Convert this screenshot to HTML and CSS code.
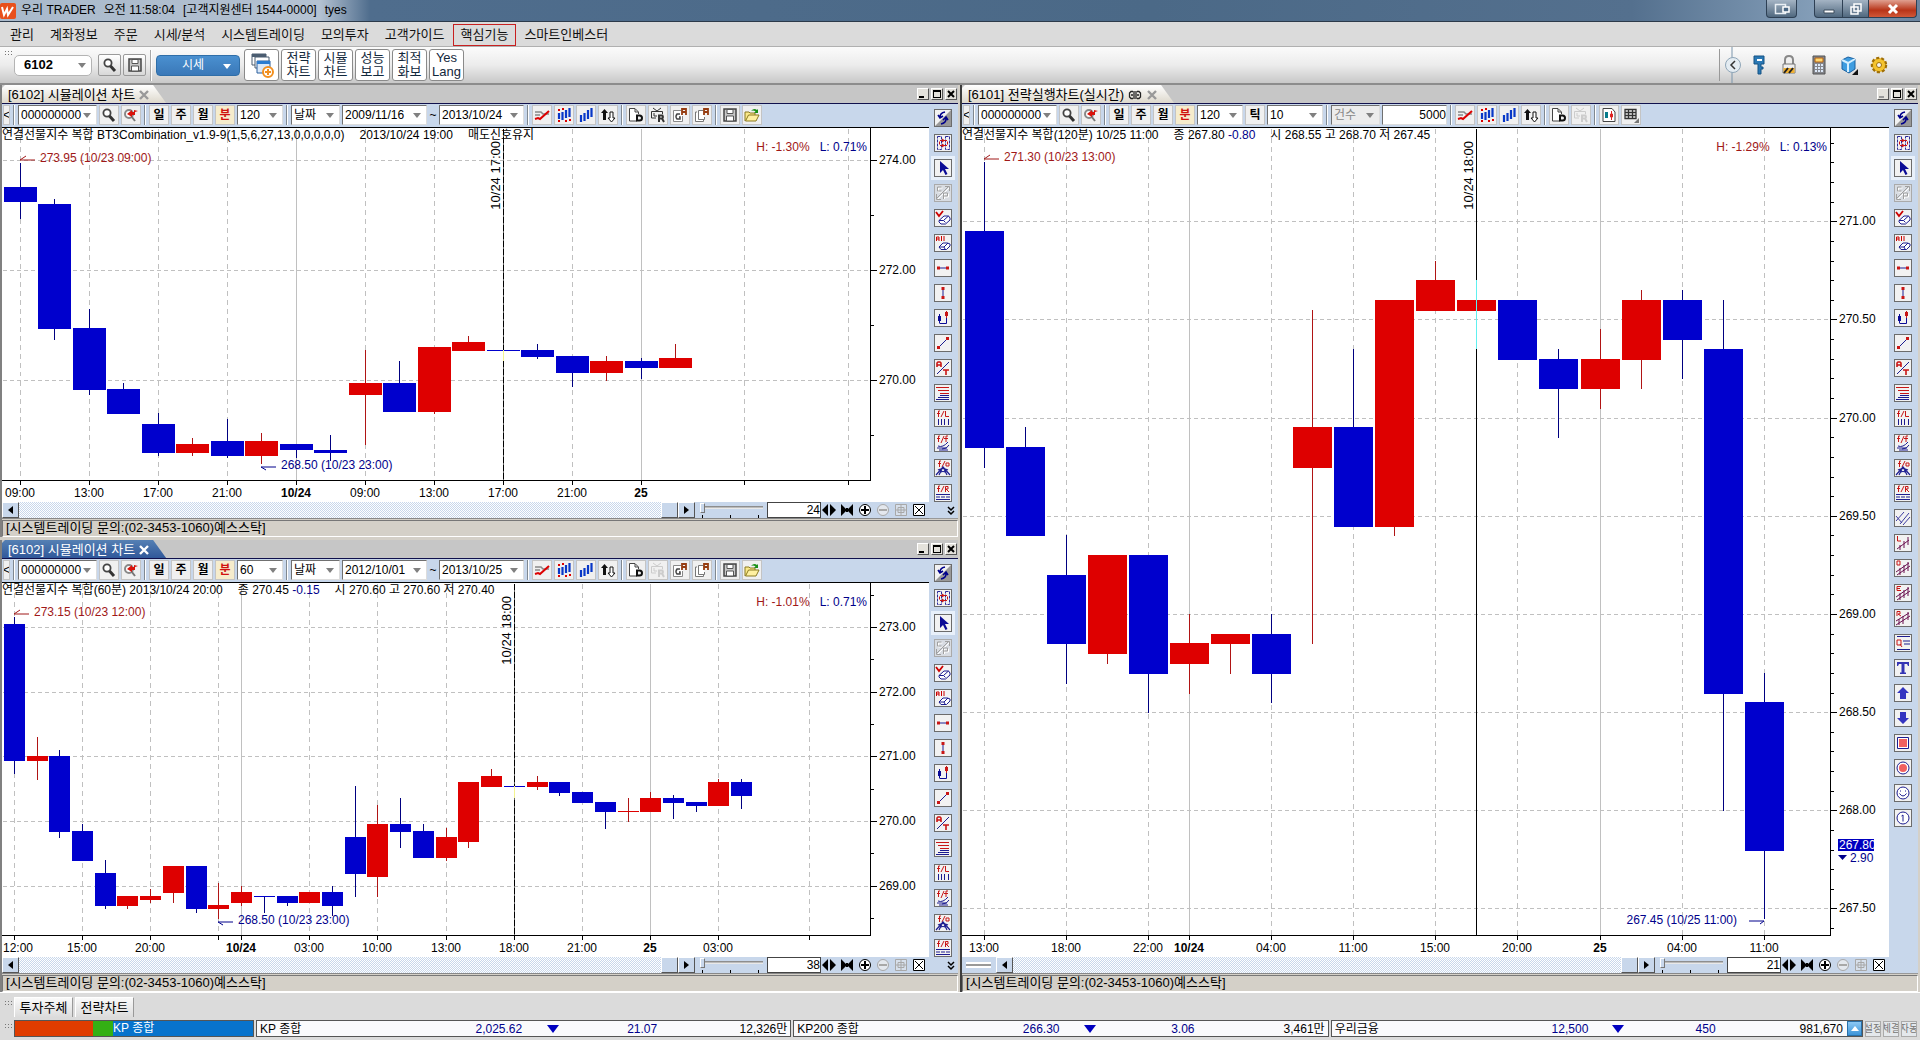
FILE: index.html
```html
<!DOCTYPE html>
<html lang="ko">
<head>
<meta charset="utf-8">
<title>우리 TRADER</title>
<link rel="stylesheet" href="styles.css">
</head>
<body>
<svg class="sprite" aria-hidden="true">
  <symbol id="i-find" viewBox="0 0 16 16"><circle cx="6" cy="6" r="3.6" fill="#fff" stroke="#444" stroke-width="1.8"/><path d="M8.5 9 13 14" stroke="#333" stroke-width="3"/></symbol>
  <symbol id="i-findred" viewBox="0 0 16 16"><circle cx="6" cy="7" r="4" fill="#fff" stroke="#888" stroke-width="2"/><path d="M8.500 9.500 12 14" stroke="#777" stroke-width="2"/><path d="M4 7 9 3v2h2V3l4 1-3 1v3H9v2z" fill="#d8140c"/></symbol>
  <symbol id="i-trend" viewBox="0 0 16 16"><path d="M1 5h6l2 2h6M1 8h5" fill="none" stroke="#888" stroke-width="1.500"/><path d="m1 12 3-1 2 1 9-8" fill="none" stroke="#d00" stroke-width="2"/></symbol>
  <symbol id="i-bars1" viewBox="0 0 16 16"><path d="M3 6v6M6.500 5v8M10 3v8M13.500 1v9" stroke="#0838c8" stroke-width="2.200"/><path d="M2 2h2v2H2zM6 1h2v2H6zM2 13h2v2H2zM9 13h2v2H9zM13 12h2v2h-2z" fill="#d00"/></symbol>
  <symbol id="i-bars2" viewBox="0 0 16 16"><path d="M3 8v7M6.500 6v8M10 3v9M13.500 1v9" stroke="#0838c8" stroke-width="2.200"/></symbol>
  <symbol id="i-updown" viewBox="0 0 16 16"><path d="M4.500 2 8 6H6v7H3V6H1z" fill="#111"/><path d="M10 5h3v6h2l-3.500 4L8 11h2z" fill="#fff" stroke="#111"/></symbol>
  <symbol id="i-docd" viewBox="0 0 16 16"><path d="M9 14H1.500V1.500H7L10.500 5v2M7 2v3h3" fill="#fff" stroke="#444"/><path d="M9 8.500h2.500q2.500 0 2.500 2.500t-2.500 2.500H9z" fill="none" stroke="#111" stroke-width="2"/></symbol>
  <symbol id="i-tvr" viewBox="0 0 16 16"><path d="m3 1 4 3 4-3M1.500 5V4.500h11V7M1.500 5v6H6M4 6v3h3" fill="none" stroke="currentColor"/><path d="M9 15V8.500h3.500q1 1.500 0 3H9m3 0 2 3.500" fill="none" stroke="currentColor" stroke-width="2"/></symbol>
  <symbol id="i-docg" viewBox="0 0 16 16"><path d="M9 3.500H1.500v11h9V9" fill="#fff" stroke="#888"/><path d="M8 7H5Q3 9.500 5 12h3v-2H7" fill="none" stroke="#444" stroke-width="1.500"/><path d="M10 8V2h4v6M10 5h4" fill="none" stroke="#963c10" stroke-width="1.800"/></symbol>
  <symbol id="i-doca" viewBox="0 0 16 16"><path d="M3 5H1.500v9.500h8V13M9 3.500H4.500v9h6V10" fill="#fff" stroke="#777"/><path d="M10 8V2h4v6M10 5h4" fill="none" stroke="#963c10" stroke-width="1.800"/></symbol>
  <symbol id="i-save" viewBox="0 0 16 16"><path d="M2 2h12v12H2z" fill="#c8c8c8" stroke="#444" stroke-width="1.500"/><path d="M5 2.500h6v4H5zM4.500 9h7v5h-7z" fill="#fff" stroke="#555"/></symbol>
  <symbol id="i-open" viewBox="0 0 16 16"><path d="M1 14V5h4l1 1h5v3" fill="#fbe98a" stroke="#8a7a20"/><path d="m1.500 14 3-6H15l-3 6z" fill="#fff0a0" stroke="#8a7a20"/><path d="M7 4q3-3.500 6-1l1-1v4h-4l1.500-1.500Q9.500 3 7 4z" fill="#189018"/></symbol>
  <symbol id="i-candledoc" viewBox="0 0 16 16"><path d="M2 1.500h9L14 5v9.500H2z" fill="#fff" stroke="#444"/><path d="M4 5h3v6H4z" fill="#067a8a"/><path d="M10.500 4v9M9.500 7h2v3h-2z" stroke="#d22" fill="#fff"/></symbol>
  <symbol id="i-grid" viewBox="0 0 16 16"><path d="M2 2.500h11v9H2zM2 5.500h11M2 8.500h11M5.500 2v10M9.500 2v10" fill="none" stroke="#333" stroke-width="1.300"/><path d="M16 11v5h-5z" fill="#777"/></symbol>

  <symbol id="s-swap" viewBox="0 0 16 16"><path d="M16 0v16H0z" fill="#999"/><path d="M10 2Q5 3 5 7M3 5l2 3 3-2M6 14q5-1 5-5M8 10l3-3 2 3" fill="none" stroke="#00008b" stroke-width="1.600"/></symbol>
  <symbol id="s-film" viewBox="0 0 16 16"><path d="M2.500 1.500h4v13h-4zM10.500 1.500h4v13h-4z" fill="none" stroke="#2a2a9a" stroke-dasharray="3 1"/><path d="M5 5.500h7M5 10.500h7" stroke="#c81616"/><path d="M7 3.500v4l3-2zM7 8.500v4l3-2zM4 6.500h1v3H4zM12 6.500h1v3h-1z" fill="#c81616"/></symbol>
  <symbol id="s-arrow" viewBox="0 0 16 16"><path d="M5 1v12l3-3 2.500 5 2-1L10 9h4z" fill="#0a0a96"/></symbol>
  <symbol id="s-cp" viewBox="0 0 16 16"><path d="M7.500 3H3.500v4h4M3 14 14 3M9.500 14V9h4v3h-4" fill="none" stroke="#fff"/><path d="M6.500 2H2.500v4h4M2 13 13 2M8.500 14V8h4v3h-4M1.500 9v5.500H6M10 1.500h4.500V6" fill="none" stroke="#a0a0a0"/></symbol>
  <symbol id="s-erase" viewBox="0 0 16 16"><path d="m1 2 3 4 4-5" fill="none" stroke="#c00" stroke-width="1.800"/><path d="m4 10.500 5-4.500h4.500L15 8v2l-4.500 4H6l-2-2zh4.500l2 2M8.500 10.500 13.500 6" fill="#fff" stroke="#1c1c90"/></symbol>
  <symbol id="s-eraseall" viewBox="0 0 16 16"><path d="M1.500 6V2h2.500v4M1.500 4H4M6.500 1v5M9 1v5" fill="none" stroke="#c00"/><path d="m4 12 4-4h4.500L15 9v2l-3.500 3.500H6zh5l1 2M9 12l4-4" fill="#fff" stroke="#1c1c90"/></symbol>
  <symbol id="s-hline" viewBox="0 0 16 16"><path d="M3 8h10" stroke="#1c1c90"/><path d="M2 6.500h3v3H2zM11 6.500h3v3h-3z" fill="#c81616"/></symbol>
  <symbol id="s-vline" viewBox="0 0 16 16"><path d="M8 3v10" stroke="#1c1c90"/><path d="M6.500 2h3v3h-3zM6.500 11h3v3h-3z" fill="#c81616"/></symbol>
  <symbol id="s-candle" viewBox="0 0 16 16"><path d="M3 6h3v5H3zM4 4h1v9H4z" fill="#0a0a96"/><path d="M4.500 13.500h7V8" fill="none" stroke="#0a0a96"/><path d="M10 2h3v4h-3zM11 1h1v7h-1z" fill="#c81616"/></symbol>
  <symbol id="s-diag" viewBox="0 0 16 16"><path d="M3 13 13 3" stroke="#1c1c90"/><path d="M2 11h3v3H2zM11 2h3v3h-3z" fill="#c81616"/></symbol>
  <symbol id="s-at" viewBox="0 0 16 16"><path d="M2 7V3l1-1h2l1 1v4M2 5h4M8 10h6M11 10v5" fill="none" stroke="#c81616" stroke-width="1.600"/><path d="M2 14 14 2" stroke="#1c1c90"/></symbol>
  <symbol id="s-levels" viewBox="0 0 16 16"><path d="M1 2.500h13M3 5.500h11M5 8.500h9" stroke="#c81616"/><path d="M5 10.500h9M3 12.500h11M1 14.500h13" stroke="#1c1c90"/></symbol>
  <symbol id="s-fl" viewBox="0 0 16 16"><path d="M5 1H3.500v6M2 3.500h3M6 7l3-6M10.500 1v5.500H14" fill="none" stroke="#c81616"/><path d="M3.500 9v6M6.500 9v6M9.500 9v6M13.500 9v6" stroke="#1c1c90"/></symbol>
  <symbol id="s-ff" viewBox="0 0 16 16"><path d="M5 1H3.500v6M2 3.500h3M6 8l3-7M13 1h-2v6M9 3.500h4" fill="none" stroke="#c81616"/><path d="M2 13h10M4 15h9M3 11q5 2 10-4M7 14q5 0 7-4" fill="none" stroke="#1c1c90"/></symbol>
  <symbol id="s-fo" viewBox="0 0 16 16"><path d="M6 1H4.500v6M3 3.500h3M7 7l3-6M11 3h3v3h-3z" fill="none" stroke="#c81616"/><path d="M1 15 8 7l7 8M4 15l4-8 4 8M3 10q5-3 10 0M5 12.500q3-2 6 0" fill="none" stroke="#1c1c90" stroke-width="1.200"/></symbol>
  <symbol id="s-fr" viewBox="0 0 16 16"><path d="M5 1H3.500v6M2 3.500h3M6 7l3-6M10.500 7V1.500H13V4h-2l3 3" fill="none" stroke="#c81616"/><path d="M1 9.500h14M1 14.500h14" stroke="#1c1c90"/><path d="M1 12h14" stroke="#1c1c90" stroke-dasharray="4 1"/></symbol>
  <symbol id="s-par" viewBox="0 0 16 16"><path d="m1 11 8-9M5 14l9-11M1 6l6 7M8 15l7-8" stroke="#3c3ca0"/></symbol>
  <symbol id="s-l" viewBox="0 0 16 16"><path d="M2.500 1v5H6" fill="none" stroke="#c81616"/><path d="m2 14 12-9M5 10v5M9 6v7M13 2v8" stroke="#6a1050"/></symbol>
  <symbol id="s-d" viewBox="0 0 16 16"><path d="M2 1h3v4H2z" fill="none" stroke="#c81616"/><path d="m1 12 13-9M2 15 15 6M5 8v7M9 5v8M13 2v9" stroke="#6a1050"/></symbol>
  <symbol id="s-e" viewBox="0 0 16 16"><path d="M6 1.500H2v4h4M2 3.500h3" fill="none" stroke="#c81616"/><path d="m1 12 13-9M2 15 15 6M5 8v7M9 5v8M13 2v9" stroke="#6a1050"/></symbol>
  <symbol id="s-r" viewBox="0 0 16 16"><path d="M2 6V1.500h3V4H3l3 2" fill="none" stroke="#c81616"/><path d="m1 11 13-8M1 15 15 6M4 9v6M8 6v8M13 2v8" stroke="#6a1050"/></symbol>
  <symbol id="s-q" viewBox="0 0 16 16"><path d="M2 1.500h13M8 6h7M9 9h6M2 14.500h13" stroke="#1c1c90"/><path d="M2 5h4v5H2zM5 9l2 3" fill="none" stroke="#c81616"/></symbol>
  <symbol id="s-text" viewBox="0 0 16 16"><path d="M2 2h12v4h-1l-1-2H9.500v8.500H11V14H5v-1.500h1.500V4H4L3 6H2z" fill="#3434b4"/></symbol>
  <symbol id="s-up" viewBox="0 0 16 16"><path d="m8 2 6 6h-3v6H5V8H2z" fill="#3434c0"/></symbol>
  <symbol id="s-down" viewBox="0 0 16 16"><path d="m8 14 6-6h-3V2H5v6H2z" fill="#3434c0"/></symbol>
  <symbol id="s-square" viewBox="0 0 16 16"><path d="M2.500 2.500h11v11h-11z" fill="#fff" stroke="#1c1c90"/><path d="M4 4h8v8H4z" fill="#f06060"/></symbol>
  <symbol id="s-circle" viewBox="0 0 16 16"><circle cx="8" cy="8" r="6" fill="#fff" stroke="#1c1c90"/><circle cx="8" cy="8" r="4" fill="#f06060"/></symbol>
  <symbol id="s-smile" viewBox="0 0 16 16"><circle cx="8" cy="8" r="6" fill="#fff" stroke="#1c1c90"/><path d="M5 6h1M10 6h1M4.500 8.500q3.500 5 7 0" fill="none" stroke="#1c1c90"/></symbol>
  <symbol id="s-one" viewBox="0 0 16 16"><circle cx="8" cy="8" r="6" fill="#fff" stroke="#1c1c90"/><path d="M6.500 6 8 5v6.500" fill="none" stroke="#1c1c90"/></symbol>

  <symbol id="z-out" viewBox="0 0 16 16"><path d="M7 2v12L1 8zM9 2v12l6-6z"/></symbol>
  <symbol id="z-in" viewBox="0 0 16 16"><path d="M2 2v12l6-6zM14 2v12L8 8z"/><path d="M8 6v4" stroke="#000" stroke-width="2"/></symbol>
  <symbol id="z-plus" viewBox="0 0 16 16"><circle cx="8" cy="8" r="5.500" fill="#fff" stroke="#000"/><path d="M4 8h8M8 4v8" stroke="#000" stroke-width="2"/></symbol>
  <symbol id="z-minus" viewBox="0 0 16 16"><circle cx="8" cy="8" r="5.500" fill="#e4e8ee" stroke="#a8a8a8"/><path d="M4 8h8" stroke="#a8a8a8" stroke-width="2"/></symbol>
  <symbol id="z-fit" viewBox="0 0 16 16"><path d="M2.500 2.500h11v11h-11zM8 2v12M2 8h12M5 5.500h6v5H5z" fill="#eee" fill-opacity=".4" stroke="#a8a8a8"/></symbol>
  <symbol id="z-close" viewBox="0 0 16 16"><path d="M2.500 2.500h11v11h-11zM4 4l8 8M12 4l-8 8" fill="#fff" stroke="#000"/></symbol>
  <symbol id="chev" viewBox="0 0 8 10"><path d="m1 1 3 3 3-3M1 5l3 3 3-3" fill="none" stroke="#000" stroke-width="1.500"/></symbol>
  <symbol id="x" viewBox="0 0 10 10"><path d="m1 1 8 8M9 1 1 9" stroke="currentColor" stroke-width="2.400"/></symbol>
  <symbol id="w-min" viewBox="0 0 10 10"><path d="M1 7h5v2H1z" fill="currentColor"/></symbol>
  <symbol id="w-max" viewBox="0 0 10 10"><path d="M1 1h8v8H1zM2 3v5h6V3z" fill="currentColor" fill-rule="evenodd"/></symbol>
  <symbol id="w-x" viewBox="0 0 10 10"><path d="m2 2 6 6M8 2 2 8" stroke="currentColor" stroke-width="2"/></symbol>
</svg>

<header class="titlebar">
  <svg class="logo" viewBox="0 0 16 16"><rect width="16" height="16" rx="2" fill="#e8501c"/><path d="m2 4 2 8 3-6 1 6 5-8" fill="none" stroke="#fff" stroke-width="2"/></svg>
  <div class="caption"><span>우리 TRADER</span><span>오전 11:58:04</span><span>[고객지원센터 1544-0000]</span><span>tyes</span></div>
  <div class="winbtns">
    <button class="wb dock" aria-label="화면 분리"><svg viewBox="0 0 16 12"><path d="M1.500 1.500h10v9h-10z" fill="none" stroke="#e8eef4" stroke-width="1.500"/><path d="M9 4h6v5H9z" fill="#4b6885" stroke="#fff" stroke-width="1.500"/></svg></button>
    <button class="wb min" aria-label="최소화"><svg viewBox="0 0 16 12"><path d="M3 7h10v3H3z" fill="#fff" stroke="#3c4c5c"/></svg></button>
    <button class="wb max" aria-label="이전 크기로"><svg viewBox="0 0 16 12"><path d="M6 1h7v7H6zM3 4h7v7H3z" fill="#6a7f94" stroke="#fff" stroke-width="1.500"/></svg></button>
    <button class="wb close" aria-label="닫기"><svg viewBox="0 0 16 12"><path d="m4 2 8 8M12 2 4 10" stroke="#fff" stroke-width="3"/></svg></button>
  </div>
</header>

<nav class="menu">
  <a href="#">관리</a><a href="#">계좌정보</a><a href="#">주문</a><a href="#">시세/분석</a><a href="#">시스템트레이딩</a><a href="#">모의투자</a><a href="#">고객가이드</a><a href="#" class="boxed">핵심기능</a><a href="#">스마트인베스터</a>
</nav>

<div class="mainbar">
  <i class="grip"></i>
  <span class="combo screen-no"><select aria-label="화면번호"><option>6102</option></select></span>
  <button class="mini" aria-label="검색"><svg><use href="#i-find"/></svg></button>
  <button class="mini save" aria-label="저장"><svg><use href="#i-save"/></svg></button>
  <i class="vsep"></i>
  <button class="quote">시세</button>
  <button class="big" aria-label="화면 추가"><svg viewBox="0 0 24 26"><path d="M2 2h14v11H2z" fill="#fff" stroke="#4a5c70"/><path d="M2 2h14v3H2z" fill="#4a5c70"/><path d="M5 5h14v11H5z" fill="#fff" stroke="#4a5c70"/><path d="M7 9h13v12H7z" fill="#dce9f8" stroke="#2b5f9c"/><path d="M7 9h13v3H7z" fill="#2b7cd0"/><circle cx="18" cy="20" r="5" fill="#fff" stroke="#f29020" stroke-width="2"/><path d="M15 20h6M18 17v6" stroke="#f29020" stroke-width="2"/></svg></button>
  <button class="big">전략<br>차트</button><button class="big">시뮬<br>차트</button><button class="big">성능<br>보고</button><button class="big">최적<br>화보</button><button class="big">Yes<br>Lang</button>
  <div class="utils">
    <button class="flat" aria-label="접기"><svg viewBox="0 0 18 36"><path d="M8 0v36" stroke="#7a95ac"/><circle cx="9" cy="18" r="7.500" fill="#e4ecf2" stroke="#8fa6b8"/><path d="m11 14-4 4 4 4" fill="none" stroke="#333" stroke-width="1.500"/></svg></button>
    <button class="flat" aria-label="인증"><svg viewBox="0 0 18 20"><path d="M4 1h10v8h-3v3h2v2h-2v5H8V9H4z" fill="#2a78b4" stroke="#155284"/><path d="M7 4h5v2H7z" fill="#fff"/></svg></button>
    <button class="flat" aria-label="잠금"><svg viewBox="0 0 18 20"><path d="M5 10V5q0-4 4-4t4 4v5" fill="none" stroke="#888" stroke-width="2"/><path d="M3 9h12v9H3z" fill="#eee" stroke="#777"/><path d="M3.500 13h11v5h-11z" fill="#f0b030"/><path d="m4 18 4-5M9 18l4-5" stroke="#222" stroke-width="2"/></svg></button>
    <button class="flat" aria-label="계산기"><svg viewBox="0 0 18 20"><path d="M3 1h12v18H3z" fill="#84868c" stroke="#555"/><path d="M5 3h8v4H5z" fill="#ffd870" stroke="#b46010"/><path d="M5 10h8M5 13h8M5 16h8" stroke="#dce8f8" stroke-width="2" stroke-dasharray="2 1"/></svg></button>
    <button class="flat" aria-label="도구"><svg viewBox="0 0 18 20"><path d="m2 5 6-3 7 2v10l-6 4-7-4z" fill="#3f9de0" stroke="#1a60a0"/><path d="m2 5 6 3 7-4M8 8v9" fill="none" stroke="#d4efff" stroke-width="2"/><path d="M18 14v6h-6z" fill="#111"/></svg></button>
    <button class="flat" aria-label="설정"><svg viewBox="0 0 18 20"><circle cx="9" cy="10" r="7" fill="#e8b020" stroke="#a07008" stroke-width="2.500" stroke-dasharray="3 2"/><circle cx="9" cy="10" r="6" fill="#f4c430"/><circle cx="9" cy="10" r="2.500" fill="#f4f4f4" stroke="#a07008"/></svg></button>
  </div>
</div>

<main class="workspace">
  <div class="stack">
    <section class="win">
      <div class="tabstrip">
        <div class="tab"><span>[6102] 시뮬레이션 차트</span><svg class="tabx"><use href="#x"/></svg></div>
        <div class="ctl"><button aria-label="최소화"><svg><use href="#w-min"/></svg></button><button aria-label="최대화"><svg><use href="#w-max"/></svg></button><button aria-label="닫기"><svg><use href="#w-x"/></svg></button></div>
      </div>
      <div class="body">
        <div class="center">
          <div class="tools">
            <button class="back" aria-label="이전">&lt;</button><i class="sep"></i>
            <span class="combo code"><select aria-label="종목코드"><option>000000000</option></select></span>
            <button aria-label="종목검색"><svg><use href="#i-find"/></svg></button><button aria-label="종목추적"><svg><use href="#i-findred"/></svg></button><i class="sep"></i>
            <button>일</button><button>주</button><button>월</button><button class="on">분</button>
            <span class="combo unit"><select aria-label="주기"><option>120</option></select></span><i class="sep"></i>
            <span class="combo kind"><select aria-label="기준"><option>날짜</option></select></span>
            <span class="combo date"><select aria-label="시작일"><option>2009/11/16</option></select></span><span class="tilde">~</span><span class="combo date"><select aria-label="종료일"><option>2013/10/24</option></select></span><i class="sep"></i>
            <button aria-label="추세"><svg><use href="#i-trend"/></svg></button><button aria-label="신호"><svg><use href="#i-bars1"/></svg></button><button aria-label="봉"><svg><use href="#i-bars2"/></svg></button><button aria-label="매매"><svg><use href="#i-updown"/></svg></button><i class="sep"></i>
            <button aria-label="D"><svg><use href="#i-docd"/></svg></button><button aria-label="R"><svg><use href="#i-tvr"/></svg></button><button aria-label="G"><svg><use href="#i-docg"/></svg></button><button aria-label="A"><svg><use href="#i-doca"/></svg></button><i class="sep"></i>
            <button aria-label="저장"><svg><use href="#i-save"/></svg></button><button aria-label="열기"><svg><use href="#i-open"/></svg></button>
          </div>
          <div class="plot">
            <svg class="chart" id="chart-a"></svg>
            <div class="legend"><span>연결선물지수 복합 BT3Combination_v1.9-9(1,5,6,27,13,0,0,0,0,0)</span><span>2013/10/24 19:00</span><span>매도신호유지</span></div>
            <div class="hl"><span class="hi">H: -1.30%</span><span class="lo">L: 0.71%</span></div>
          </div>
          <div class="scroll">
            <button class="arr left" aria-label="왼쪽"></button><div class="track"><i class="thumb"></i></div><button class="arr right" aria-label="오른쪽"></button>
            <input class="zoom" type="range" min="0" max="100" value="0" aria-label="확대"><input class="count" value="24" aria-label="봉 개수">
            <button class="z" aria-label="축소"><svg><use href="#z-out"/></svg></button><button class="z" aria-label="확대"><svg><use href="#z-in"/></svg></button><button class="z" aria-label="더하기"><svg><use href="#z-plus"/></svg></button><button class="z" aria-label="빼기"><svg><use href="#z-minus"/></svg></button><button class="z" aria-label="맞춤"><svg><use href="#z-fit"/></svg></button><button class="z" aria-label="닫기"><svg><use href="#z-close"/></svg></button>
          </div>
        </div>
        <aside class="side">
          <button aria-label="전환"><svg><use href="#s-swap"/></svg></button><button aria-label="연동"><svg><use href="#s-film"/></svg></button><button class="sel" aria-label="선택"><svg><use href="#s-arrow"/></svg></button><button class="off" aria-label="복사"><svg><use href="#s-cp"/></svg></button><button aria-label="지우기"><svg><use href="#s-erase"/></svg></button><button aria-label="모두 지우기"><svg><use href="#s-eraseall"/></svg></button><button aria-label="수평선"><svg><use href="#s-hline"/></svg></button><button aria-label="수직선"><svg><use href="#s-vline"/></svg></button><button aria-label="봉 연결"><svg><use href="#s-candle"/></svg></button><button aria-label="추세선"><svg><use href="#s-diag"/></svg></button><button aria-label="각도"><svg><use href="#s-at"/></svg></button><button aria-label="되돌림"><svg><use href="#s-levels"/></svg></button><button aria-label="피보나치 선"><svg><use href="#s-fl"/></svg></button><button aria-label="피보나치 팬"><svg><use href="#s-ff"/></svg></button><button aria-label="피보나치 호"><svg><use href="#s-fo"/></svg></button><button aria-label="피보나치 비율"><svg><use href="#s-fr"/></svg></button>
          <svg class="more"><use href="#chev"/></svg>
        </aside>
      </div>
      <div class="status">[시스템트레이딩 문의:(02-3453-1060)예스스탁]</div>
    </section>

    <section class="win">
      <div class="tabstrip">
        <div class="tab active"><span>[6102] 시뮬레이션 차트</span><svg class="tabx"><use href="#x"/></svg></div>
        <div class="ctl"><button aria-label="최소화"><svg><use href="#w-min"/></svg></button><button aria-label="최대화"><svg><use href="#w-max"/></svg></button><button aria-label="닫기"><svg><use href="#w-x"/></svg></button></div>
      </div>
      <div class="body">
        <div class="center">
          <div class="tools">
            <button class="back" aria-label="이전">&lt;</button><i class="sep"></i>
            <span class="combo code"><select aria-label="종목코드"><option>000000000</option></select></span>
            <button aria-label="종목검색"><svg><use href="#i-find"/></svg></button><button aria-label="종목추적"><svg><use href="#i-findred"/></svg></button><i class="sep"></i>
            <button>일</button><button>주</button><button>월</button><button class="on">분</button>
            <span class="combo unit"><select aria-label="주기"><option>60</option></select></span><i class="sep"></i>
            <span class="combo kind"><select aria-label="기준"><option>날짜</option></select></span>
            <span class="combo date"><select aria-label="시작일"><option>2012/10/01</option></select></span><span class="tilde">~</span><span class="combo date"><select aria-label="종료일"><option>2013/10/25</option></select></span><i class="sep"></i>
            <button aria-label="추세"><svg><use href="#i-trend"/></svg></button><button aria-label="신호"><svg><use href="#i-bars1"/></svg></button><button aria-label="봉"><svg><use href="#i-bars2"/></svg></button><button aria-label="매매"><svg><use href="#i-updown"/></svg></button><i class="sep"></i>
            <button aria-label="D"><svg><use href="#i-docd"/></svg></button><button aria-label="R" disabled><svg><use href="#i-tvr"/></svg></button><button aria-label="G"><svg><use href="#i-docg"/></svg></button><button aria-label="A"><svg><use href="#i-doca"/></svg></button><i class="sep"></i>
            <button aria-label="저장"><svg><use href="#i-save"/></svg></button><button aria-label="열기"><svg><use href="#i-open"/></svg></button>
          </div>
          <div class="plot">
            <svg class="chart" id="chart-b"></svg>
            <div class="legend"><span>연결선물지수 복합(60분) 2013/10/24 20:00</span><span>종 270.45 <b class="lo">-0.15</b></span><span>시 270.60 고 270.60 저 270.40</span></div>
            <div class="hl"><span class="hi">H: -1.01%</span><span class="lo">L: 0.71%</span></div>
          </div>
          <div class="scroll">
            <button class="arr left" aria-label="왼쪽"></button><div class="track"><i class="thumb"></i></div><button class="arr right" aria-label="오른쪽"></button>
            <input class="zoom" type="range" min="0" max="100" value="0" aria-label="확대"><input class="count" value="38" aria-label="봉 개수">
            <button class="z" aria-label="축소"><svg><use href="#z-out"/></svg></button><button class="z" aria-label="확대"><svg><use href="#z-in"/></svg></button><button class="z" aria-label="더하기"><svg><use href="#z-plus"/></svg></button><button class="z" aria-label="빼기"><svg><use href="#z-minus"/></svg></button><button class="z" aria-label="맞춤"><svg><use href="#z-fit"/></svg></button><button class="z" aria-label="닫기"><svg><use href="#z-close"/></svg></button>
          </div>
        </div>
        <aside class="side">
          <button aria-label="전환"><svg><use href="#s-swap"/></svg></button><button aria-label="연동"><svg><use href="#s-film"/></svg></button><button class="sel" aria-label="선택"><svg><use href="#s-arrow"/></svg></button><button class="off" aria-label="복사"><svg><use href="#s-cp"/></svg></button><button aria-label="지우기"><svg><use href="#s-erase"/></svg></button><button aria-label="모두 지우기"><svg><use href="#s-eraseall"/></svg></button><button aria-label="수평선"><svg><use href="#s-hline"/></svg></button><button aria-label="수직선"><svg><use href="#s-vline"/></svg></button><button aria-label="봉 연결"><svg><use href="#s-candle"/></svg></button><button aria-label="추세선"><svg><use href="#s-diag"/></svg></button><button aria-label="각도"><svg><use href="#s-at"/></svg></button><button aria-label="되돌림"><svg><use href="#s-levels"/></svg></button><button aria-label="피보나치 선"><svg><use href="#s-fl"/></svg></button><button aria-label="피보나치 팬"><svg><use href="#s-ff"/></svg></button><button aria-label="피보나치 호"><svg><use href="#s-fo"/></svg></button><button aria-label="피보나치 비율"><svg><use href="#s-fr"/></svg></button>
          <svg class="more"><use href="#chev"/></svg>
        </aside>
      </div>
      <div class="status">[시스템트레이딩 문의:(02-3453-1060)예스스탁]</div>
    </section>
  </div>

  <section class="win wide">
    <div class="tabstrip">
      <div class="tab"><span>[6101] 전략실행차트(실시간)</span><svg class="link" viewBox="0 0 14 10"><path d="M5 1.500H3L1.500 3v4L3 8.500h2M5 5H3M9 1.500h2L12.500 3v4L11 8.500H9M9 5h2M6 1v8M8 1v8" fill="none" stroke="#222" stroke-width="1.300"/></svg><svg class="tabx"><use href="#x"/></svg></div>
      <div class="ctl"><button class="dim" aria-label="최소화"><svg><use href="#w-min"/></svg></button><button aria-label="최대화"><svg><use href="#w-max"/></svg></button><button aria-label="닫기"><svg><use href="#w-x"/></svg></button></div>
    </div>
    <div class="body">
      <div class="center">
        <div class="tools">
          <button class="back" aria-label="이전">&lt;</button><i class="sep"></i>
          <span class="combo code"><select aria-label="종목코드"><option>000000000</option></select></span>
          <button aria-label="종목검색"><svg><use href="#i-find"/></svg></button><button aria-label="종목추적"><svg><use href="#i-findred"/></svg></button><i class="sep"></i>
          <button>일</button><button>주</button><button>월</button><button class="on">분</button>
          <span class="combo unit"><select aria-label="주기"><option>120</option></select></span>
          <button>틱</button><span class="combo tick"><select aria-label="틱"><option>10</option></select></span><i class="sep"></i>
          <span class="combo kind off"><select aria-label="조회 기준" disabled><option>건수</option></select></span><input class="qty" value="5000" aria-label="건수"><i class="sep"></i>
          <button aria-label="추세"><svg><use href="#i-trend"/></svg></button><button aria-label="신호"><svg><use href="#i-bars1"/></svg></button><button aria-label="봉"><svg><use href="#i-bars2"/></svg></button><button aria-label="매매"><svg><use href="#i-updown"/></svg></button><i class="sep"></i>
          <button aria-label="D"><svg><use href="#i-docd"/></svg></button><button aria-label="R" disabled><svg><use href="#i-tvr"/></svg></button><i class="sep"></i>
          <button aria-label="차트 문서"><svg><use href="#i-candledoc"/></svg></button><button aria-label="격자"><svg><use href="#i-grid"/></svg></button>
        </div>
        <div class="plot">
          <svg class="chart" id="chart-c"></svg>
          <div class="legend"><span>연결선물지수 복합(120분) 10/25 11:00</span><span>종 267.80 <b class="lo">-0.80</b></span><span>시 268.55 고 268.70 저 267.45</span></div>
          <div class="hl"><span class="hi">H: -1.29%</span><span class="lo">L: 0.13%</span></div>
        </div>
        <div class="scroll">
          <i class="handle"></i><button class="arr left" aria-label="왼쪽"></button><div class="track"><i class="thumb"></i></div><button class="arr right" aria-label="오른쪽"></button>
          <input class="zoom" type="range" min="0" max="100" value="0" aria-label="확대"><input class="count" value="21" aria-label="봉 개수">
          <button class="z" aria-label="축소"><svg><use href="#z-out"/></svg></button><button class="z" aria-label="확대"><svg><use href="#z-in"/></svg></button><button class="z" aria-label="더하기"><svg><use href="#z-plus"/></svg></button><button class="z" aria-label="빼기"><svg><use href="#z-minus"/></svg></button><button class="z" aria-label="맞춤"><svg><use href="#z-fit"/></svg></button><button class="z" aria-label="닫기"><svg><use href="#z-close"/></svg></button>
        </div>
      </div>
      <aside class="side">
        <button aria-label="전환"><svg><use href="#s-swap"/></svg></button><button aria-label="연동"><svg><use href="#s-film"/></svg></button><button class="sel" aria-label="선택"><svg><use href="#s-arrow"/></svg></button><button class="off" aria-label="복사"><svg><use href="#s-cp"/></svg></button><button aria-label="지우기"><svg><use href="#s-erase"/></svg></button><button aria-label="모두 지우기"><svg><use href="#s-eraseall"/></svg></button><button aria-label="수평선"><svg><use href="#s-hline"/></svg></button><button aria-label="수직선"><svg><use href="#s-vline"/></svg></button><button aria-label="봉 연결"><svg><use href="#s-candle"/></svg></button><button aria-label="추세선"><svg><use href="#s-diag"/></svg></button><button aria-label="각도"><svg><use href="#s-at"/></svg></button><button aria-label="되돌림"><svg><use href="#s-levels"/></svg></button><button aria-label="피보나치 선"><svg><use href="#s-fl"/></svg></button><button aria-label="피보나치 팬"><svg><use href="#s-ff"/></svg></button><button aria-label="피보나치 호"><svg><use href="#s-fo"/></svg></button><button aria-label="피보나치 비율"><svg><use href="#s-fr"/></svg></button><button aria-label="평행선"><svg><use href="#s-par"/></svg></button><button aria-label="채널 L"><svg><use href="#s-l"/></svg></button><button aria-label="채널 D"><svg><use href="#s-d"/></svg></button><button aria-label="채널 E"><svg><use href="#s-e"/></svg></button><button aria-label="채널 R"><svg><use href="#s-r"/></svg></button><button aria-label="사분선"><svg><use href="#s-q"/></svg></button><button aria-label="글자"><svg><use href="#s-text"/></svg></button><button aria-label="위 화살표"><svg><use href="#s-up"/></svg></button><button aria-label="아래 화살표"><svg><use href="#s-down"/></svg></button><button aria-label="사각형"><svg><use href="#s-square"/></svg></button><button aria-label="원"><svg><use href="#s-circle"/></svg></button><button aria-label="그림"><svg><use href="#s-smile"/></svg></button><button aria-label="번호"><svg><use href="#s-one"/></svg></button>
      </aside>
    </div>
    <div class="status">[시스템트레이딩 문의:(02-3453-1060)예스스탁]</div>
  </section>
</main>

<footer class="foot">
  <div class="row pages"><i class="grip"></i><button>투자주체</button><button>전략차트</button></div>
  <div class="row ticker"><i class="grip"></i>
    <div class="gauge"><i class="up"></i><i class="flat-part"></i><span>KP 종합</span></div>
    <div class="cell"><span>KP 종합</span><span class="lo">2,025.62</span><i class="tri"></i><span class="lo">21.07</span><span>12,326만</span></div>
    <div class="cell"><span>KP200 종합</span><span class="lo">266.30</span><i class="tri"></i><span class="lo">3.06</span><span>3,461만</span></div>
    <div class="cell last"><span>우리금융</span><span class="lo">12,500</span><i class="tri"></i><span class="lo">450</span><span>981,670</span><button class="pop" aria-label="펼치기"></button></div>
    <button class="opt">설정</button><button class="opt">체결</button><button class="opt">자동</button>
  </div>
</footer>
<script src="charts.js"></script>
</body>
</html>
```
FILE: styles.css
```css
* { box-sizing: border-box; }
html, body { height: 100%; }
body {
  margin: 0;
  display: flex;
  flex-direction: column;
  min-height: 100vh;
  background: #dbdbdb;
  color: #000;
  font: 12px/14px "Liberation Sans", "Noto Sans CJK KR", sans-serif;
  overflow: hidden;
}
button, select, input { font: inherit; color: inherit; margin: 0; padding: 0; border-radius: 0; }
button { cursor: pointer; white-space: nowrap; }
svg { display: block; }
.sprite { position: absolute; width: 0; height: 0; }
.hi { color: #a01818; }
.lo { color: #00008b; font-weight: normal; }

/* title bar */
.titlebar {
  display: flex;
  align-items: flex-start;
  height: 22px;
  flex: none;
  border-bottom: 1px solid #2c3a4a;
  background: linear-gradient(90deg, #a9b9cb 0, #b4c2d2 320px, #4f6d8d 370px, #4b6987 60%, #54708e 85%, #86a0ba 95%, #6a849f);
}
.logo { width: 16px; height: 16px; margin-top: 3px; flex: none; }
.caption { display: flex; gap: 8px; padding: 3px 0 0 5px; flex: 1; }
.winbtns { display: flex; padding-right: 3px; }
.wb { height: 18px; border: 1px solid #2e4054; border-top: 0; background: linear-gradient(#a4b4c4, #50687f); display: flex; align-items: center; justify-content: center; }
.wb svg { width: 16px; height: 12px; }
.dock { width: 31px; margin-right: 17px; border-radius: 0 0 4px 4px; }
.min { width: 29px; border-radius: 0 0 0 4px; }
.max { width: 26px; border-left: 0; }
.close { width: 48px; border-left: 0; border-radius: 0 0 4px 0; background: linear-gradient(#e0a090, #b83418 60%, #d05838); }

/* menu */
.menu { display: flex; align-items: center; height: 25px; flex: none; gap: 16px; padding: 1px 0 0 10px; background: #dbdbdb; border-bottom: 1px solid #b0b0b0; font-size: 13px; }
.menu a { color: #111; text-decoration: none; white-space: nowrap; }
.menu .boxed { border: 1px solid #c82020; padding: 3px 7px; margin: 0 -8px; }

/* main toolbar */
.mainbar { display: flex; align-items: center; height: 38px; flex: none; padding: 0 32px 0 4px; background: linear-gradient(#fbfbfb, #ececec 50%, #c8c8c8); border-bottom: 2px solid #8c8c8c; }
.grip { width: 8px; height: 7px; flex: none; align-self: flex-start; margin-top: 3px; background: radial-gradient(circle, #777 1px, transparent 1px) 0 0 / 3px 3px; }
.combo { position: relative; display: flex; flex: none; background: #fff; }
.combo select { appearance: none; width: 100%; border: 0; background: transparent; outline: 0; opacity: 1; }
.combo::after { content: ""; position: absolute; right: 5px; top: 50%; margin-top: -2px; border: 4px solid transparent; border-top: 5px solid #808080; border-bottom: 0; pointer-events: none; }
.screen-no { width: 78px; height: 21px; margin: 0 6px 0 2px; border: 1px solid #b4b4b4; border-radius: 5px; }
.screen-no select { font-weight: bold; font-size: 13px; padding-left: 9px; }
.mini { width: 23px; height: 22px; margin-right: 2px; border: 1px solid #9a9a9a; border-radius: 2px; background: linear-gradient(#fff, #d8d8d8); display: flex; align-items: center; justify-content: center; }
.mini svg { width: 16px; height: 16px; }
.vsep { width: 2px; height: 31px; margin: 0 4px 0 2px; background: #a8a8a8; border-right: 1px solid #fff; }
.quote { position: relative; width: 84px; height: 21px; margin-right: 4px; padding-right: 10px; border: 1px solid #2f6ea8; border-radius: 4px; background: linear-gradient(#4a90d0, #3a78b8); color: #fff; }
.quote::after { content: ""; position: absolute; right: 8px; top: 8px; border: 4px solid transparent; border-top: 5px solid #fff; border-bottom: 0; }
.big { width: 35px; height: 32px; margin-right: 2px; border: 1px solid #8a8a8a; border-radius: 3px; background: #fff; font-size: 13px; line-height: 14px; color: #12283c; display: flex; align-items: center; justify-content: center; }
.big svg { width: 24px; height: 26px; }
.utils { display: flex; align-items: center; gap: 12px; margin-left: auto; height: 32px; border-left: 1px solid #999; padding-left: 4px; }
.flat { border: 0; background: none; }
.flat svg { width: 18px; height: 20px; }
.flat:first-child { margin-right: -4px; }
.flat:first-child svg { height: 36px; }

/* windows */
.workspace { flex: 1; min-height: 0; display: grid; grid-template-columns: 1fr 1fr; background: #d4d0c8; }
.stack { display: flex; flex-direction: column; gap: 3px; min-height: 0; min-width: 0; }
.win { flex: 1; min-height: 0; min-width: 0; display: flex; flex-direction: column; border-left: 2px solid #808080; padding-right: 2px; background: #d4d0c8; }
.wide { border-left: 2px solid #3c3c3c; }
.tabstrip { display: flex; justify-content: space-between; align-items: stretch; height: 19px; flex: none; background: #c6c6c6; border-bottom: 1px solid #10104c; }
.tab { display: flex; align-items: center; gap: 4px; padding: 1px 17px 0 6px; background: linear-gradient(#fff, #ddd8cc); clip-path: polygon(0 3px, 3px 0, calc(100% - 13px) 0, 100% 100%, 0 100%); white-space: nowrap; font-size: 13px; }
.tab.active { background: linear-gradient(#5580b4, #30589a); color: #fff; }
.tabx { width: 10px; height: 10px; color: #999; }
.active .tabx { color: #fff; }
.link { width: 14px; height: 10px; margin-right: 1px; }
.ctl { display: flex; gap: 2px; padding: 3px 1px 0 0; }
.ctl button { width: 12px; height: 12px; border: 1px solid #fff; border-right-color: #555; border-bottom-color: #555; background: #e4e2dc; }
.ctl svg { width: 10px; height: 10px; }
.ctl .dim { color: #999; }
.body { flex: 1; min-height: 0; display: flex; }
.center { flex: 1; min-width: 0; display: flex; flex-direction: column; }

.tools { display: flex; align-items: center; gap: 2px; height: 24px; flex: none; padding: 0 0 1px 1px; background: #c8d7eb; border-bottom: 1px solid #000; }
.tools button { width: 20px; height: 20px; flex: none; border: 1px solid #fff; border-right-color: #9a9a9a; border-bottom-color: #9a9a9a; outline: 1px solid #c4c4c4; outline-offset: -1px; background: #f0f0f0; font-weight: bold; display: flex; align-items: center; justify-content: center; }
.tools button svg { width: 16px; height: 16px; color: #333; }
.tools button:disabled svg { color: #ccc; }
.tools .back { width: 7px; font-weight: normal; }
.tools .on { color: #d01010; background: #f6eccc; }
.sep { width: 2px; height: 20px; flex: none; margin: 0 1px; background: #808890; border-right: 1px solid #fff; }
.tools .combo { height: 20px; border: 1px solid #707070; border-right-color: #ddd; border-bottom-color: #ddd; }
.tools .combo select { padding-left: 2px; }
.code { width: 79px; }
.unit { width: 46px; }
.kind { width: 49px; }
.date { width: 85px; }
.tick { width: 56px; }
.tools .off { background: #ececec; color: #888; }
.tilde { width: 8px; text-align: center; }
.qty { width: 65px; height: 20px; border: 1px solid #707070; border-right-color: #ddd; border-bottom-color: #ddd; text-align: right; }

.plot { flex: 1; min-height: 0; position: relative; display: flex; background: #fff; }
.chart { flex: 1; min-width: 0; height: 100%; font-size: 12px; }
.chart .v { font-size: 13px; }
.legend { position: absolute; left: 0; top: 0; display: flex; gap: 15px; white-space: nowrap; }
.hl { position: absolute; right: 62px; top: 12px; display: flex; gap: 10px; }

.scroll { display: flex; align-items: center; height: 17px; flex: none; background: #c8d7eb; border-bottom: 1px solid #888; }
.arr { position: relative; width: 17px; height: 16px; flex: none; border: 1px solid #fff; border-right-color: #555; border-bottom-color: #555; background: #c8d7eb; }
.arr::after { content: ""; position: absolute; left: 5px; top: 3px; border: 4px solid transparent; }
.left::after { border-right: 5px solid #000; border-left: 0; }
.right::after { border-left: 5px solid #000; border-right: 0; }
.track { flex: 1; height: 16px; display: flex; justify-content: flex-end; background: repeating-conic-gradient(#c8d7eb 0 25%, #fff 0 50%) 0 0 / 2px 2px; }
.thumb { width: 17px; background: #c8d7eb; border: 1px solid #fff; border-right-color: #555; border-bottom-color: #555; }
.handle { width: 25px; height: 6px; margin: 0 5px 0 4px; border: solid #fff; border-width: 2px 0; background: #999; }
.zoom { appearance: none; width: 63px; height: 16px; margin: 0 4px 0 5px; background: linear-gradient(#777, #fff) 0 4px / 100% 3px no-repeat, linear-gradient(90deg, #000 1px, transparent 1px) 2px 13px / 28px 3px repeat-x; }
.zoom::-webkit-slider-thumb { appearance: none; width: 5px; height: 10px; margin-bottom: 4px; background: #c8d7eb; border: 1px solid #fff; border-right-color: #777; border-bottom-color: #777; }
.count { width: 54px; height: 16px; border: 1px solid #444; background: #fff; text-align: right; }
.z { width: 18px; height: 16px; flex: none; border: 0; background: none; }
.z svg { width: 16px; height: 16px; }

.side { position: relative; width: 29px; flex: none; display: flex; flex-direction: column; gap: 7px; padding: 5px 0 0 5px; background: #c8d7eb; border-bottom: 1px solid #999; overflow: hidden; }
.side button { width: 18px; height: 18px; flex: none; border: 1px solid #6c6c6c; background: #f2f2f2; display: flex; }
.side button svg { width: 16px; height: 16px; }
.side .sel { outline: 3px solid #e8f0fa; }
.side .off { background: #d8dce2; border-color: #aaa; }
.more { position: absolute; right: 3px; bottom: 2px; width: 8px; height: 10px; }

.status { height: 17px; flex: none; padding: 0 3px; margin-top: 1px; border: 1px solid #777; border-right-color: #fff; border-bottom-color: #fff; background: #d4d0c8; font-size: 13px; line-height: 14px; }

/* footer */
.foot { flex: none; padding: 4px 3px 3px 4px; border-top: 1px solid #fff; background: #dbdbdb; }
.row { display: flex; align-items: center; }
.pages { gap: 2px; height: 20px; margin-bottom: 3px; }
.pages button { width: 59px; height: 20px; border: 1px solid #fff; border-right-color: #999; border-bottom: 0; background: linear-gradient(#fafafa, #dcdcdc); font-size: 13px; }
.ticker { gap: 2px; height: 17px; }
.row .grip { margin-right: 0; }
.gauge { display: flex; width: 240px; height: 17px; flex: none; border: 1px solid #555; background: #0873cc; color: #fff; }
.up { width: 78px; background: #e03c00; }
.flat-part { width: 20px; background: #34b014; }
.cell { flex: 1; height: 17px; display: grid; grid-template-columns: 130fr 134fr 62fr 74fr 131fr; align-items: center; padding: 0 3px; border: 1px solid #555; background: #fafafc; text-align: right; white-space: nowrap; }
.cell span:first-child { text-align: left; }
.last { grid-template-columns: 130fr 125fr 60fr 68fr 128fr 19px; padding-right: 0; }
.tri { justify-self: center; border: 6px solid transparent; border-top: 8px solid #0000c0; border-bottom: 0; }
.pop { position: relative; justify-self: end; width: 15px; height: 15px; border: 1px solid #2a70a8; background: linear-gradient(#8cc8f4, #3c94d8); }
.pop::after { content: ""; position: absolute; left: 3px; top: 4px; border: 4px solid transparent; border-bottom: 5px solid #fff; border-top: 0; }
.opt { width: 16px; height: 16px; border: 1px solid #aaa; background: #e4e8ec; color: #777; overflow: hidden; display: flex; justify-content: center; font-size: 10px; }
```
FILE: charts.js
```js
// Candles are [open, high, low, close]; a fifth value of 1 marks a rising doji.
const charts = {
  'chart-a': {
    top: 274.58, bottom: 268.19, x0: 17.8, step: 34.5, body: 33, minor: 1,
    prices: [274, 272, 270],
    times: [[0, '09:00'], [2, '13:00'], [4, '17:00'], [6, '21:00'], [8, '10/24', 1], [10, '09:00'], [12, '13:00'], [14, '17:00'], [16, '21:00'], [18, '25', 1], [21, ''], [24, '']],
    cross: { bar: 14, text: '10/24 17:00', dashed: true, mark: '#f4f490', from: 270.55, to: 270.35 },
    high: { bar: 0, price: 273.95, text: '273.95 (10/23 09:00)' },
    low: { bar: 7, price: 268.5, text: '268.50 (10/23 23:00)' },
    candles: [[273.5, 273.95, 272.95, 273.25], [273.2, 273.3, 270.75, 270.95], [270.95, 271.3, 269.75, 269.85], [269.85, 269.95, 269.4, 269.4], [269.2, 269.4, 268.65, 268.7], [268.7, 268.95, 268.65, 268.85], [268.9, 269.3, 268.6, 268.65], [268.65, 269.05, 268.5, 268.9], [268.85, 268.85, 268.6, 268.75], [268.73, 269, 268.55, 268.7], [269.75, 270.55, 268.85, 269.95], [269.95, 270.35, 269.45, 269.45], [269.45, 270.6, 269.4, 270.6], [270.55, 270.8, 270.55, 270.7], [270.55, 270.55, 270.55, 270.55], [270.55, 270.65, 270.4, 270.45], [270.45, 270.45, 269.9, 270.15], [270.15, 270.45, 270, 270.35], [270.35, 270.4, 270.05, 270.25], [270.25, 270.65, 270.25, 270.4]]
  },
  'chart-b': {
    top: 273.68, bottom: 268.24, x0: 11.8, step: 22.73, body: 21, minor: 0.5,
    prices: [273, 272, 271, 270, 269],
    times: [[0, '12:00'], [3, '15:00'], [6, '20:00'], [9, ''], [10, '10/24', 1], [13, '03:00'], [16, '10:00'], [19, '13:00'], [22, '18:00'], [25, '21:00'], [28, '25', 1], [31, '03:00'], [35, '']],
    cross: { bar: 22, text: '10/24 18:00', dashed: true, mark: '#f4f490', from: 270.55, to: 270.35 },
    high: { bar: 0, price: 273.15, text: '273.15 (10/23 12:00)' },
    low: { bar: 9, price: 268.5, text: '268.50 (10/23 23:00)' },
    candles: [[273.05, 273.15, 270.75, 270.95], [270.95, 271.3, 270.65, 271], [271, 271.1, 269.75, 269.85], [269.85, 269.95, 269.4, 269.4], [269.2, 269.4, 268.65, 268.7], [268.7, 268.85, 268.65, 268.85], [268.8, 268.95, 268.75, 268.85], [268.9, 269.3, 268.75, 269.3], [269.3, 269.3, 268.6, 268.65], [268.65, 269.05, 268.5, 268.7], [268.75, 269, 268.7, 268.9], [268.85, 268.85, 268.6, 268.85], [268.85, 268.85, 268.7, 268.75], [268.75, 268.9, 268.75, 268.9], [268.9, 269, 268.55, 268.7], [269.75, 270.55, 268.85, 269.2], [269.15, 270.25, 268.85, 269.95], [269.95, 270.35, 269.6, 269.85], [269.85, 269.95, 269.45, 269.45], [269.45, 269.9, 269.4, 269.75], [269.7, 270.6, 269.6, 270.6], [270.55, 270.8, 270.55, 270.7], [270.55, 270.55, 270.55, 270.55], [270.55, 270.7, 270.5, 270.6], [270.6, 270.6, 270.4, 270.45], [270.45, 270.45, 270.3, 270.3], [270.3, 270.3, 269.9, 270.15], [270.15, 270.35, 270, 270.15, 1], [270.15, 270.45, 270.15, 270.35], [270.35, 270.4, 270.05, 270.3], [270.3, 270.3, 270.15, 270.25], [270.25, 270.65, 270.25, 270.6], [270.6, 270.65, 270.2, 270.4]]
  },
  'chart-c': {
    top: 271.475, bottom: 267.365, x0: 21.8, step: 41.05, body: 39, minor: 0.1,
    prices: [271, 270.5, 270, 269.5, 269, 268.5, 268, 267.5],
    times: [[0, '13:00'], [2, '18:00'], [4, '22:00'], [5, '10/24', 1], [7, '04:00'], [9, '11:00'], [11, '15:00'], [13, '20:00'], [15, '25', 1], [17, '04:00'], [19, '11:00']],
    cross: { bar: 12, text: '10/24 18:00', mark: '#60f0f0', from: 270.7, to: 270.35 },
    high: { bar: 0, price: 271.3, text: '271.30 (10/23 13:00)' },
    low: { bar: 19, price: 267.45, text: '267.45 (10/25 11:00)', before: true },
    last: { price: 267.8, diff: '2.90' },
    candles: [[270.95, 271.3, 269.75, 269.85], [269.85, 269.95, 269.4, 269.4], [269.2, 269.4, 268.65, 268.85], [268.8, 269.3, 268.75, 269.3], [269.3, 269.3, 268.5, 268.7], [268.75, 269, 268.6, 268.85], [268.85, 268.9, 268.7, 268.9], [268.9, 269, 268.55, 268.7], [269.75, 270.55, 268.85, 269.95], [269.95, 270.35, 269.45, 269.45], [269.45, 270.6, 269.4, 270.6], [270.55, 270.8, 270.55, 270.7], [270.55, 270.6, 270.55, 270.6], [270.6, 270.6, 270.3, 270.3], [270.3, 270.35, 269.9, 270.15], [270.15, 270.45, 270.05, 270.3], [270.3, 270.65, 270.15, 270.6], [270.6, 270.65, 270.2, 270.4], [270.35, 270.6, 268, 268.6], [268.55, 268.7, 267.45, 267.8]]
  }
};

const AXIS_W = 59;
const AXIS_H = 22;

function draw(svg, c) {
  const w = svg.clientWidth - AXIS_W;
  const h = svg.clientHeight - AXIS_H;
  const y = p => Math.round((c.top - p) / (c.top - c.bottom) * h);
  const x = i => Math.round(c.x0 + i * c.step);
  const out = [];
  const rect = (left, top, width, height, fill) => out.push(`<rect x="${left}" y="${top}" width="${width}" height="${height}" fill="${fill}"/>`);
  const line = (x1, y1, x2, y2, stroke, dash) => out.push(`<path d="M${x1} ${y1}L${x2} ${y2}" transform="translate(.5 .5)" stroke="${stroke}"${dash ? ` stroke-dasharray="${dash}"` : ''}/>`);
  const text = (left, base, value, attrs = '') => out.push(`<text x="${left}" y="${base}" ${attrs}>${value}</text>`);

  out.push('<g shape-rendering="crispEdges">');
  c.prices.forEach(p => line(0, y(p), w, y(p), '#c0c0c0', '4 3'));
  c.times.forEach(([i, , day]) => {
    line(x(i), 0, x(i), h, '#c0c0c0', day ? '' : '5 4');
    line(x(i), h, x(i), h + 4, '#000');
  });
  line(x(c.cross.bar), 0, x(c.cross.bar), h, c.cross.dashed ? '#666' : '#000');
  if (c.cross.dashed) line(x(c.cross.bar), 0, x(c.cross.bar), h, '#000', '6 2');

  c.candles.forEach(([o, hi, lo, cl, up], i) => {
    const rising = cl > o || up;
    if (hi > lo) rect(x(i), y(hi), 1, y(lo) - y(hi) + 1, rising ? '#b01414' : '#000080');
    const height = o === cl ? 1 : Math.abs(y(o) - y(cl)) + 1;
    rect(x(i) - (c.body - 1) / 2, y(Math.max(o, cl)), c.body, height, rising ? '#de0000' : '#0000cd');
  });
  rect(x(c.cross.bar), y(c.cross.from), 1, y(c.cross.to) - y(c.cross.from), c.cross.mark);

  rect(0, h, w + 1, 1, '#000');
  rect(w, 0, 1, h, '#000');
  for (let p = Math.ceil(c.bottom / c.minor) * c.minor; p < c.top; p += c.minor) rect(w, y(p), 4, 1, '#000');
  c.prices.forEach(p => rect(w, y(p), 7, 1, '#000'));
  out.push('</g>');

  c.prices.forEach(p => text(w + 9, y(p) + 4, p.toFixed(2)));
  c.times.forEach(([i, label, day]) => {
    // keep the first label clear of the left edge
    text(Math.max(x(i), 16), h + 17, label, `text-anchor="middle"${day ? ' font-weight="bold"' : ''}`);
  });

  const hx = x(c.high.bar), hy = y(c.high.price) - 3;
  out.push(`<path d="M${hx + 15} ${hy}H${hx}l6-4" fill="none" stroke="#a01818"/>`);
  text(hx + 20, hy + 2, c.high.text, 'fill="#a01818"');
  const lx = x(c.low.bar), ly = y(c.low.price) + 4;
  if (c.low.before) {
    out.push(`<path d="M${lx - 15} ${ly - 1}H${lx}l-4 3" fill="none" stroke="#00008b"/>`);
    text(lx - 27, ly + 2, c.low.text, 'fill="#00008b" text-anchor="end"');
  } else {
    out.push(`<path d="M${lx + 15} ${ly}H${lx}l5 3" fill="none" stroke="#00008b"/>`);
    text(lx + 20, ly + 2, c.low.text, 'fill="#00008b"');
  }
  const cx = x(c.cross.bar) - 3;
  text(cx, 13, c.cross.text, `class="v" text-anchor="end" transform="rotate(-90 ${cx} 13)"`);

  if (c.last) {
    const py = y(c.last.price);
    rect(w + 8, py - 11, 36, 12, '#0000c0');
    text(w + 9, py - 1, c.last.price.toFixed(2), 'fill="#fff"');
    out.push(`<path d="M${w + 8} ${py + 5}h9l-4.500 5z" fill="#00008b"/>`);
    text(w + 20, py + 12, c.last.diff, 'fill="#00008b"');
  }
  svg.innerHTML = out.join('');
}

function drawAll() {
  for (const id in charts) draw(document.getElementById(id), charts[id]);
}
drawAll();
addEventListener('resize', drawAll);
```
